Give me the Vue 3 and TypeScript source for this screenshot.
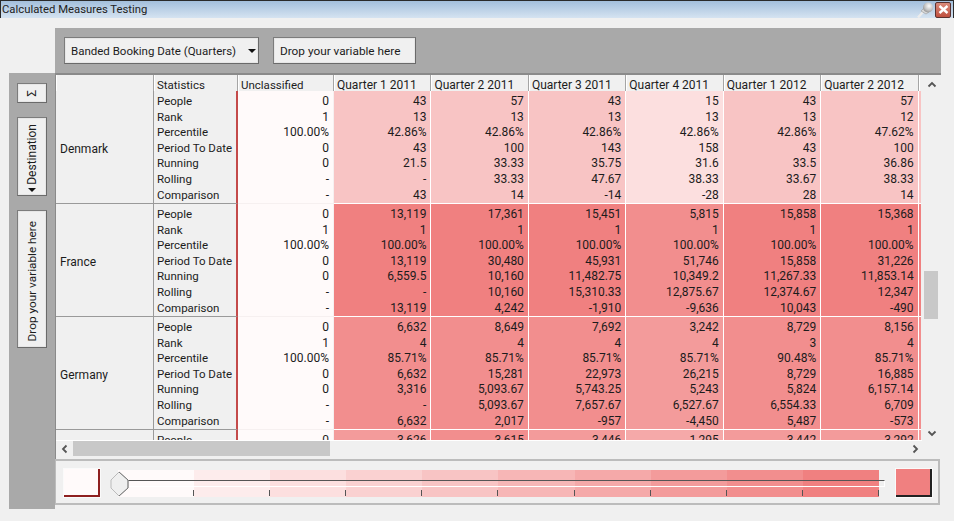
<template>
  <div class="window">
    <header class="titlebar">
      <span class="title">Calculated Measures Testing</span>
      <svg class="pin" width="17" height="16" viewBox="0 0 17 16">
        <defs>
          <radialGradient id="pinball" cx="0.6" cy="0.35" r="0.7">
            <stop offset="0" stop-color="#fbfbfb" />
            <stop offset="0.6" stop-color="#c4c4c4" />
            <stop offset="1" stop-color="#8f8f8f" />
          </radialGradient>
        </defs>
        <path d="M1 15.5 L6 10" stroke="#ececec" stroke-width="2.4" />
        <path d="M4 9 L8 5 L12 10 L9 12 Z" fill="#d8d8d8" stroke="#9a9a9a" stroke-width="0.6" />
        <circle cx="11" cy="5.5" r="5" fill="url(#pinball)" />
      </svg>
      <button class="close">
        <svg width="11" height="9" viewBox="0 0 11 9">
          <path d="M1.5 1 L9.5 8 M9.5 1 L1.5 8" stroke="#fff" stroke-width="2.4" />
        </svg>
      </button>
    </header>

    <main class="workspace">
      <div class="corner"></div>
      <div class="toolbar">
        <div class="chip combo">
          <span>Banded Booking Date (Quarters)</span>
          <i class="caret"></i>
        </div>
        <div class="chip drop">Drop your variable here</div>
      </div>

      <aside class="rail">
        <div class="chip vertical sigma"><span class="vtext">Σ</span></div>
        <div class="chip vertical destination">
          <i class="caret"></i>
          <span class="vtext">Destination</span>
        </div>
        <div class="chip vertical dropv"><span class="vtext">Drop your variable here</span></div>
      </aside>

      <section class="content">
        <div class="scroller">
          <div class="viewport">
            <div class="grid head">
              <div class="hcell"></div>
              <div class="hcell word">Statistics</div>
              <div class="hcell word">Unclassified</div>
              <div v-for="q in quarters" :key="q" class="hcell">{{ q }}</div>
            </div>
            <div class="body">
              <div v-for="(g, gi) in groups" :key="gi" class="grid group">
                <div class="label">{{ g.name }}</div>
                <div class="stats">
                  <div v-for="s in stats" :key="s">{{ s }}</div>
                </div>
                <div class="unclassified">
                  <div v-for="(u, i) in unclassified" :key="i">{{ u }}</div>
                </div>
                <div
                  v-for="(col, ci) in g.cols"
                  :key="ci"
                  class="cell"
                  :style="{ background: binColor(col.bin) }"
                >
                  <div v-for="(v, i) in col.values" :key="i">{{ v }}</div>
                </div>
                <div class="cell" :style="{ background: binColor(g.nextBin) }"></div>
              </div>
            </div>
          </div>
          <div class="vbar">
            <svg class="arrow" width="10" height="7" viewBox="0 0 10 7"><path d="M1.5 5.5 L5 2 L8.5 5.5" /></svg>
            <div class="vtrack"><div class="vthumb"></div></div>
            <svg class="arrow" width="10" height="7" viewBox="0 0 10 7"><path d="M1.5 1.5 L5 5 L8.5 1.5" /></svg>
          </div>
          <div class="hbar">
            <svg class="arrow" width="7" height="10" viewBox="0 0 7 10"><path d="M5.5 1.5 L2 5 L5.5 8.5" /></svg>
            <div class="htrack"><div class="hthumb"></div></div>
            <svg class="arrow" width="7" height="10" viewBox="0 0 7 10"><path d="M1.5 1.5 L5 5 L1.5 8.5" /></svg>
          </div>
        </div>

        <div class="legend">
          <div class="swatch low"></div>
          <div class="slider">
            <div class="bands">
              <div v-for="n in 10" :key="n" class="band" :style="{ background: binColor(n - 1) }"></div>
            </div>
            <div class="track-line"></div>
            <svg class="thumb" width="19" height="26" viewBox="0 0 19 26">
              <path d="M9 1 L18 9 L18 17 L9 25 L1 17 L1 9 Z" fill="#efefef" stroke="#bbb" />
              <path d="M9 1 L18 9 L18 17 L9 25" fill="none" stroke="#777" />
            </svg>
          </div>
          <div class="swatch high"></div>
        </div>
      </section>
    </main>
  </div>
</template>

<script setup lang="ts">
type Col = { bin: number; values: string[] };
type Group = { name: string; cols: Col[]; nextBin: number };

const quarters = [
  "Quarter 1 2011",
  "Quarter 2 2011",
  "Quarter 3 2011",
  "Quarter 4 2011",
  "Quarter 1 2012",
  "Quarter 2 2012",
  "Quarter 3 2012",
];
const stats = ["People", "Rank", "Percentile", "Period To Date", "Running", "Rolling", "Comparison"];
const unclassified = ["0", "1", "100.00%", "0", "0", "-", "-"];

const groups: Group[] = [
  {
    name: "Denmark",
    nextBin: 4,
    cols: [
      { bin: 4, values: ["43", "13", "42.86%", "43", "21.5", "-", "43"] },
      { bin: 4, values: ["57", "13", "42.86%", "100", "33.33", "33.33", "14"] },
      { bin: 4, values: ["43", "13", "42.86%", "143", "35.75", "47.67", "-14"] },
      { bin: 2, values: ["15", "13", "42.86%", "158", "31.6", "38.33", "-28"] },
      { bin: 4, values: ["43", "13", "42.86%", "43", "33.5", "33.67", "28"] },
      { bin: 4, values: ["57", "12", "47.62%", "100", "36.86", "38.33", "14"] },
    ],
  },
  {
    name: "France",
    nextBin: 9,
    cols: [
      { bin: 9, values: ["13,119", "1", "100.00%", "13,119", "6,559.5", "-", "13,119"] },
      { bin: 9, values: ["17,361", "1", "100.00%", "30,480", "10,160", "10,160", "4,242"] },
      { bin: 9, values: ["15,451", "1", "100.00%", "45,931", "11,482.75", "15,310.33", "-1,910"] },
      { bin: 8, values: ["5,815", "1", "100.00%", "51,746", "10,349.2", "12,875.67", "-9,636"] },
      { bin: 9, values: ["15,858", "1", "100.00%", "15,858", "11,267.33", "12,374.67", "10,043"] },
      { bin: 9, values: ["15,368", "1", "100.00%", "31,226", "11,853.14", "12,347", "-490"] },
    ],
  },
  {
    name: "Germany",
    nextBin: 8,
    cols: [
      { bin: 8, values: ["6,632", "4", "85.71%", "6,632", "3,316", "-", "6,632"] },
      { bin: 8, values: ["8,649", "4", "85.71%", "15,281", "5,093.67", "5,093.67", "2,017"] },
      { bin: 8, values: ["7,692", "4", "85.71%", "22,973", "5,743.25", "7,657.67", "-957"] },
      { bin: 7, values: ["3,242", "4", "85.71%", "26,215", "5,243", "6,527.67", "-4,450"] },
      { bin: 8, values: ["8,729", "3", "90.48%", "8,729", "5,824", "6,554.33", "5,487"] },
      { bin: 8, values: ["8,156", "4", "85.71%", "16,885", "6,157.14", "6,709", "-573"] },
    ],
  },
  {
    name: "",
    nextBin: 7,
    cols: [
      { bin: 7, values: ["3,626"] },
      { bin: 8, values: ["3,615"] },
      { bin: 7, values: ["3,446"] },
      { bin: 6, values: ["1,295"] },
      { bin: 7, values: ["3,442"] },
      { bin: 7, values: ["3,292"] },
    ],
  },
];

// snow -> lightcoral, split into the ten bands of the legend
function binColor(bin: number): string {
  const t = bin / 9;
  const r = Math.round(255 + (240 - 255) * t);
  const gb = Math.round(250 + (128 - 250) * t);
  return `rgb(${r}, ${gb}, ${gb})`;
}
</script>

<style scoped>
.window {
  width: 954px;
  height: 521px;
  background: #f0f0f0;
  overflow: hidden;
  display: flex;
  flex-direction: column;
  font-family: Roboto, "Noto Sans", sans-serif;
  font-size: 12px;
  color: #1c1c1c;
  white-space: nowrap;
}

.titlebar {
  height: 18px;
  flex: none;
  box-sizing: border-box;
  border-top: 1px solid #2a2a2a;
  border-left: 1px solid #2a2a2a;
  border-right: 1px solid #2a2a2a;
  background: linear-gradient(#a3bfdc, #d5e3f1);
  display: flex;
  align-items: center;
  padding-left: 1px;
  padding-right: 2px;
}

.title {
  flex: 1;
  font-size: 11.3px;
  line-height: 16px;
  color: #222;
}

.pin {
  margin-right: 1px;
}

.close {
  width: 16px;
  height: 16px;
  padding: 0;
  border: 1px solid #5a3230;
  border-radius: 2px;
  background: linear-gradient(#d98a7a, #c0503f);
  display: flex;
  align-items: center;
  justify-content: center;
}

.workspace {
  flex: 1;
  display: grid;
  grid-template-columns: 46px 886px;
  grid-template-rows: 45px 436px;
  padding: 10px 0 0 9px;
}

.toolbar {
  background: #a9a9a9;
  display: flex;
  gap: 14px;
  padding: 9px 9px 0;
}

.chip {
  box-sizing: border-box;
  background: #f0f0f0;
  border: 1px solid #7c7c7c;
  border-right-color: #6a6a6a;
  border-bottom-color: #6a6a6a;
  box-shadow: inset 0 0 0 1px #e6e6e6;
  display: flex;
  align-items: center;
}

.combo {
  width: 195px;
  height: 27px;
  padding: 0 1px 0 6px;
  gap: 0;
  justify-content: space-between;
  font-size: 11.5px;
}

.combo .caret {
  margin-right: 1px;
}

.drop {
  width: 143px;
  height: 27px;
  padding-left: 6px;
  font-size: 11.8px;
}

.caret {
  width: 0;
  height: 0;
  border-left: 4px solid transparent;
  border-right: 4px solid transparent;
  border-top: 4px solid #111;
}

.rail {
  background: #a9a9a9;
  display: flex;
  flex-direction: column;
  padding: 10px 8px;
  gap: 14px;
}

.vertical {
  width: 30px;
  justify-content: center;
}

.vtext {
  writing-mode: vertical-rl;
  transform: rotate(180deg);
}

.sigma {
  height: 20px;
}

.destination {
  height: 79px;
  flex-direction: column-reverse;
  justify-content: flex-start;
  padding-bottom: 3px;
  gap: 3px;
}

.dropv {
  height: 138px;
  font-size: 11.8px;
  padding-top: 4px;
}

.content {
  display: flex;
  flex-direction: column;
  border-top: 2px solid #8a8a8a;
}

.scroller {
  height: 384px;
  flex: none;
  display: grid;
  grid-template-columns: 865px 20px;
  grid-template-rows: 365px 19px;
  padding-left: 1px;
  border-left: 1px solid #8a8a8a;
  box-sizing: border-box;
}

.viewport {
  overflow: hidden;
  width: 865px;
  height: 365px;
  margin-left: -1px;
}

.grid {
  display: grid;
  grid-template-columns: 98px 84px 96px repeat(7, 97.45px);
  width: 960px;
}

.head {
  height: 20px;
  box-sizing: border-box;
  border-bottom: 2px solid #b0b0b0;
}

.hcell {
  background: #f0f0f0;
  border-right: 1px solid #a5a5a5;
  box-shadow: inset 1px 0 0 #fff;
  line-height: 20px;
  padding-left: 3px;
  overflow: hidden;
}

.word {
  font-size: 11.5px;
}

.body {
  margin-top: -4px;
}

.group {
  height: 113px;
  line-height: 15.6px;
}

.label,
.stats {
  background: #f0f0f0;
  border-right: 1px solid #9a9a9a;
  border-bottom: 1px solid #9a9a9a;
  box-sizing: border-box;
}

.label {
  display: flex;
  align-items: center;
  padding: 5px 0 0 4px;
}

.stats {
  padding: 3px 0 0 3px;
  font-size: 11.5px;
  border-right: 2px solid #c44a4a;
}

.unclassified,
.cell {
  box-sizing: border-box;
  text-align: right;
  padding: 3px 4px 0 0;
  border-right: 1px solid #f6f0f0;
  border-bottom: 1px solid #f6f0f0;
}

.unclassified {
  background: #fffafa;
}

.cell {
  border-right-color: #fff;
  border-bottom-color: #fff;
}

.vbar {
  display: flex;
  flex-direction: column;
  align-items: center;
  padding: 6px 0 3px;
  grid-column: 2;
  grid-row: 1;
}

.vtrack {
  flex: 1;
  width: 100%;
  padding-top: 183px;
  box-sizing: border-box;
}

.vthumb {
  height: 48px;
  width: 14px;
  margin-left: 2px;
  background: #c8c8c8;
}

.hbar {
  grid-column: 1;
  grid-row: 2;
  display: flex;
  align-items: center;
  padding: 0 3px 3px 5px;
  margin-left: -1px;
  border-top: 1px solid #fff;
  box-sizing: border-box;
  gap: 5px;
}

.htrack {
  flex: 1;
  height: 15px;
}

.hthumb {
  width: 257px;
  height: 15px;
  background: #c8c8c8;
}

.arrow path {
  fill: none;
  stroke: #555;
  stroke-width: 1.8;
}

.legend {
  height: 46px;
  flex: none;
  width: 885px;
  box-sizing: border-box;
  border: 2px solid #bcbcbc;
  border-left-width: 1px;
  display: flex;
  align-items: center;
  padding: 2px 6px 0 8px;
}

.swatch {
  width: 36px;
  height: 28px;
  flex: none;
  box-sizing: border-box;
  border-right: 2px solid #222;
  border-bottom: 2px solid #222;
  box-shadow: 0 0 0 1px #fafafa;
}

.swatch.low {
  background: #fffafa;
  border-right-color: #8e1f1f;
  border-bottom-color: #8e1f1f;
}

.swatch.high {
  background: #f08080;
}

.slider {
  position: relative;
  width: 761px;
  flex: none;
  height: 27px;
  margin: 0 17px 0 18px;
}

.bands {
  display: flex;
  height: 100%;
}

.band {
  flex: 1;
  position: relative;
}

.band::after {
  content: "";
  position: absolute;
  right: 0;
  bottom: 1px;
  height: 6px;
  width: 1px;
  background: #555;
}

.track-line {
  position: absolute;
  left: 10px;
  right: -6px;
  top: 10px;
  height: 7px;
  box-sizing: border-box;
  border-top: 1px solid #555;
  border-bottom: 1px solid #fff;
  border-right: 1px solid #fff;
}

.thumb {
  position: absolute;
  left: -8px;
  top: 1px;
}
</style>

<style>
html,
body {
  margin: 0;
  background: #f0f0f0;
}
</style>
